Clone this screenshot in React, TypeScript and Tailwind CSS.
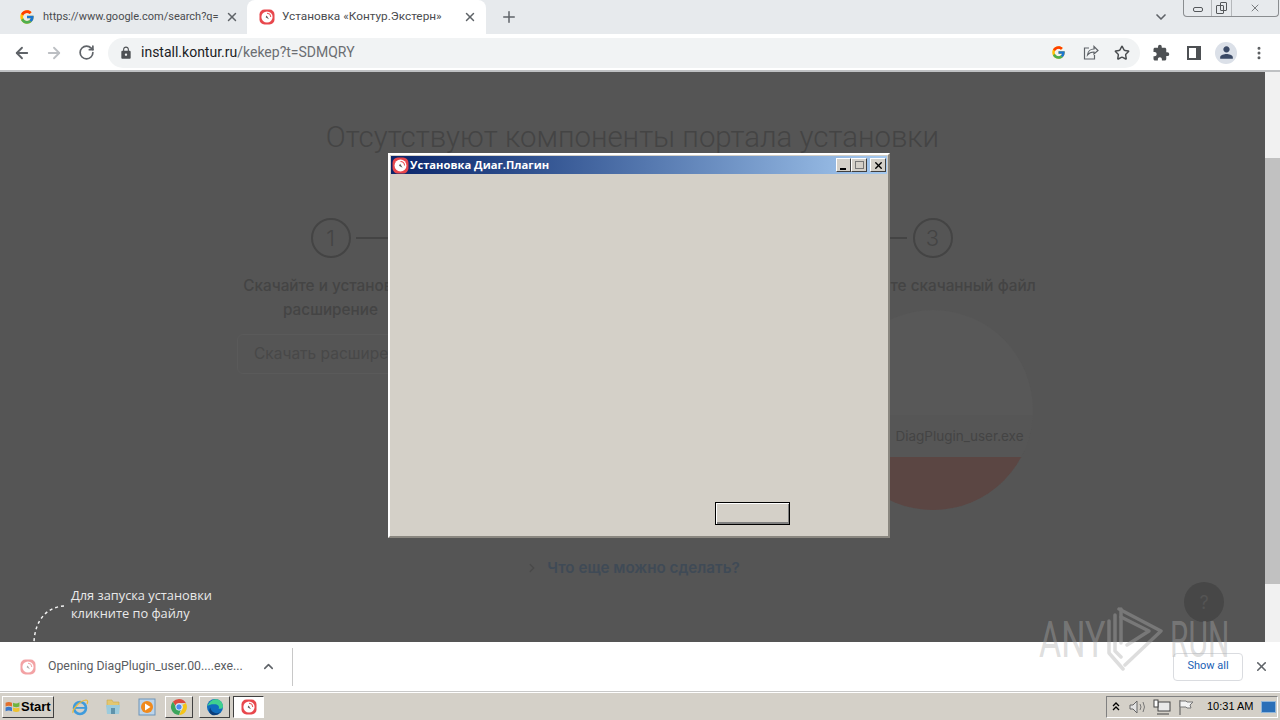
import { ArrowLeft, ArrowRight, RotateCw, Plus, X, ChevronDown, ChevronUp, ChevronRight, Star, MoreVertical } from "lucide-react";
import { FcGoogle } from "react-icons/fc";
import { MdExtension, MdLock, MdPerson } from "react-icons/md";

function KonturIcon({ size = 16, faded = false }: { size?: number; faded?: boolean }) {
  return (
    <svg width={size} height={size} viewBox="0 0 16 16" className={faded ? "opacity-50" : ""}>
      <rect x="0.5" y="0.5" width="15" height="15" rx="5" fill="#e8474c" />
      <circle cx="8" cy="8" r="5.6" fill="#fff" />
      <path d="M8 4.2 A3.8 3.8 0 0 1 11.8 8" fill="none" stroke="#e8474c" strokeWidth="1" />
      <path d="M7.6 6.4 L10 10.2 L6.6 8.2 Z" fill="#555" />
    </svg>
  );
}

function ChromeIcon() {
  return (
    <svg width="18" height="18" viewBox="0 0 18 18">
      <path d="M9 1a8 8 0 0 1 6.9 4H9a4 4 0 0 0-3.7 2.4L2.9 3.8A8 8 0 0 1 9 1z" fill="#dd4b3e" />
      <path d="M15.9 5A8 8 0 0 1 9 17l3.4-6A4 4 0 0 0 12.5 7z" fill="#f5c518" />
      <path d="M9 17a8 8 0 0 1-6.1-13.2L6 9a4 4 0 0 0 4.8 2.6z" fill="#3ba55c" />
      <circle cx="9" cy="9" r="3.2" fill="#4a8af4" stroke="#fff" strokeWidth="0.8" />
    </svg>
  );
}

function EdgeIcon() {
  return (
    <svg width="18" height="18" viewBox="0 0 18 18">
      <circle cx="9" cy="9" r="8" fill="#0f6cbd" />
      <path d="M1.5 8C3 3.5 7 1 10.5 1.2 14.5 1.5 17 5 17 8.5c0 2.2-2.4 2.6-4.4 2.2 1-1.6 0-4-3-4.4C6 6 3.5 6.5 1.5 8z" fill="#3fd08f" />
      <path d="M8 14.5c1.500 1.200 4 1 6-.4-2 3.400-6.400 4-8.600 2.400C3 15 2.600 11.800 4.400 9.500 4.200 11.500 6 13.800 8 14.500z" fill="#0b3d7a" />
    </svg>
  );
}

function IeIcon() {
  return (
    <svg width="18" height="18" viewBox="0 0 18 18">
      <circle cx="9" cy="10" r="6" fill="none" stroke="#3f9bdc" strokeWidth="2.6" />
      <rect x="4" y="9" width="10" height="1.8" fill="#3f9bdc" />
      <path d="M2 15C1 12 8 3 15 2c2 0 2 2 1 4" fill="none" stroke="#e8b93c" strokeWidth="1.2" />
    </svg>
  );
}

function FolderIcon() {
  return (
    <svg width="18" height="18" viewBox="0 0 18 18">
      <path d="M3 2h5l1 2h6v5H3z" fill="#e3c770" stroke="#c9a94f" strokeWidth="0.6" />
      <path d="M2 7h14l-1 9H3z" fill="#9ccbdc" />
      <rect x="7" y="10" width="4" height="6" fill="#5f93ab" />
    </svg>
  );
}

function MediaIcon() {
  return (
    <svg width="18" height="18" viewBox="0 0 18 18">
      <rect x="1" y="1" width="16" height="16" fill="#bcd4ea" stroke="#6d94b8" />
      <circle cx="9" cy="9" r="6" fill="#f08a1d" />
      <path d="M7 5.5L12.5 9 7 12.5z" fill="#fff" />
    </svg>
  );
}

function WinFlag() {
  return (
    <svg width="17" height="16" viewBox="0 0 15 15" className="shrink-0">
      <path d="M1 3.5C3 2.500 5 2.500 7 3.5V7C5 6 3 6 1 7z" fill="#e2702c" />
      <path d="M8 3.5C10 4.500 12 4.500 14 3V7C12 8 10 8 8 7z" fill="#6fb43f" />
      <path d="M1 8C3 7 5 7 7 8v3.500C5 10.500 3 10.500 1 11.500z" fill="#3a78c9" />
      <path d="M8 8c2 1 4 1 6 0v3.500c-2 1-4 1-6 0z" fill="#eec22e" />
    </svg>
  );
}

function ShareIcon() {
  return (
    <svg width="17" height="17" viewBox="0 0 17 17" fill="none" stroke="#5f6368" strokeWidth="1.2" className="ml-[16px]">
      <path d="M7 4H2.500v11h10v-4" />
      <path d="M5.500 11c.300-3.500 3-6 6.500-6V2.500l4 4-4 3.500V8c-3 0-5 1-6.500 3z" />
    </svg>
  );
}

export default function App() {
  return (
    <div className="relative w-[1280px] h-[720px] overflow-hidden flex flex-col font-['Roboto',sans-serif] bg-[#d4d0c8]">
      {/* browser chrome */}
      <div className="h-[34px] shrink-0 bg-[#e7eaed] flex items-start pl-[8px]">
        <div className="w-[239px] h-[34px] flex items-center pl-[11px] pr-[8px]">
          <FcGoogle size={16} className="shrink-0" />
          <span className="ml-[8px] flex-1 whitespace-nowrap text-[11px] text-[#4a4c4f]">https://www.google.com/search?q=</span>
          <X size={14} strokeWidth={2.5} className="shrink-0 text-[#5f6368]" />
        </div>
        <div className="w-[239px] h-[34px] flex items-center bg-white rounded-t-[8px] pl-[12px] pr-[9px]">
          <KonturIcon />
          <span className="ml-[7px] flex-1 whitespace-nowrap text-[11.8px] text-[#4a4c4f]">Установка «Контур.Экстерн»</span>
          <X size={14} strokeWidth={2.5} className="shrink-0 text-[#5f6368]" />
        </div>
        <Plus size={18} strokeWidth={2} className="ml-[14px] mt-[8px] text-[#5f6368]" />
        <ChevronDown size={16} strokeWidth={2.5} className="ml-[635px] mt-[9px] text-[#5f6368]" />
        <div className="ml-[14px] w-[96px] h-[17px] flex border border-t-0 border-[#8a8d90] rounded-b-[4px]">
          <div className="w-[28px] flex items-center justify-center border-r border-[#b5b8bb]">
            <span className="mt-[3px] w-[10px] h-[5px] border border-[#55585b] rounded-[2px]" />
          </div>
          <div className="w-[20px] flex items-center justify-center border-r border-[#b5b8bb] relative">
            <span className="w-[8px] h-[9px] mt-[2px] -ml-[3px] border border-[#55585b] rounded-[1px]" />
            <span className="absolute top-[2px] left-[8px] w-[7px] h-[9px] border border-[#55585b] rounded-[1px]" />
          </div>
          <div className="flex-1 flex items-center justify-center">
            <X size={12} strokeWidth={1.5} className="text-[#55585b]" />
          </div>
        </div>
      </div>

      <div className="h-[38px] shrink-0 bg-white border-b-2 border-[#bfc1c3] flex items-center pt-[1px] pl-[13px] text-[#5f6368]">
        <ArrowLeft size={18} strokeWidth={2.4} />
        <ArrowRight size={18} strokeWidth={2.4} className="ml-[14px] text-[#bcbfc3]" />
        <RotateCw size={17} strokeWidth={2.4} className="ml-[15px]" />
        <div className="ml-[13px] w-[1032px] h-[30px] rounded-full bg-[#f1f3f4] flex items-center pl-[11px] pr-[10px]">
          <MdLock size={14} className="text-[#4e5154]" />
          <span className="ml-[8px] text-[14px] text-[#202124]">
            install.kontur.ru<span className="text-[#6b6e72]">/kekep?t=SDMQRY</span>
          </span>
          <FcGoogle size={15} className="ml-auto" />
          <ShareIcon />
          <Star size={16} strokeWidth={2.2} className="ml-[15px] text-[#4a4d50]" />
        </div>
        <MdExtension size={18} className="ml-[12px] text-[#4d5053]" />
        <div className="ml-[17px] w-[14px] h-[14px] border-2 border-[#4d5053] border-r-[5px]" />
        <div className="ml-[14px] w-[22px] h-[22px] rounded-full bg-[#dbe0e8] flex items-center justify-center">
          <MdPerson size={19} className="text-[#3b4a66]" />
        </div>
        <MoreVertical size={16} strokeWidth={2.5} className="ml-[14px] text-[#5a5d60]" />
      </div>

      {/* dimmed page */}
      <div className="h-[570px] shrink-0 flex">
        <div className="relative flex-1 bg-[#555555] overflow-hidden pt-[47px] flex flex-col items-center font-['Inter',sans-serif]">
          <h1 className="font-['Roboto',sans-serif] text-[29.4px] font-light leading-[36px] whitespace-nowrap text-[#444444]">
            Отсутствуют компоненты портала установки
          </h1>

          <div className="mt-[63px] mr-[2px] w-[903px] grid grid-cols-3 text-[#444444]">
            <div className="flex flex-col items-center">
              <div className="relative w-full flex justify-center">
                <span className="w-[40px] h-[40px] rounded-full border-2 border-[#444444] flex items-center justify-center text-[22px] font-light">1</span>
                <span className="absolute left-[176px] right-0 top-[19px] h-[2px] bg-[#444444]" />
              </div>
              <p className="mt-[16px] text-[15.3px] leading-[24px] font-medium text-center">
                Скачайте и установите<br />расширение
              </p>
              <div className="mt-[12px] w-[187px] h-[40px] flex items-center pl-[16px] border border-[#5a5a5a] rounded-[6px] whitespace-nowrap text-[15.5px] text-[#484848]">
                Скачать расширение
              </div>
            </div>

            <div />

            <div className="flex flex-col items-center">
              <div className="relative w-full flex justify-center">
                <span className="absolute left-0 right-[176px] top-[19px] h-[2px] bg-[#444444]" />
                <span className="w-[40px] h-[40px] rounded-full border-2 border-[#444444] flex items-center justify-center text-[22px] font-light">3</span>
              </div>
              <p className="mt-[16px] h-[36px] text-[15.3px] leading-[24px] font-medium text-center whitespace-nowrap">
                Запустите скачанный файл
              </p>
              <div className="w-[200px] h-[200px] rounded-full overflow-hidden flex flex-col bg-[#585858]">
                <div className="flex-1" />
                <div className="h-[42px] shrink-0 bg-[#565656] flex items-center pl-[63px] text-[13.5px] whitespace-nowrap text-[#444444]">
                  DiagPlugin_user.exe
                </div>
                <div className="h-[53px] shrink-0 bg-[#5b4643]" />
              </div>
            </div>
          </div>

          <div className="mt-[46px] flex items-center text-[15.2px] leading-[24px] font-semibold text-[#3f4a56]">
            <ChevronRight size={14} strokeWidth={2.5} className="mr-[8px] text-[#4a4a4a]" />
            Что еще можно сделать?
          </div>

          <div className="absolute left-[71px] top-[514px] text-[12.8px] leading-[18px] text-[#e9e9e9] font-['Open_Sans',sans-serif]">
            Для запуска установки<br />кликните по файлу
          </div>
          <svg width="40" height="40" viewBox="0 0 40 40" className="absolute left-[28px] top-[530px]">
            <path d="M36 4 C18 5 7 19 6 40" fill="none" stroke="#f2f2f2" strokeWidth="1.5" strokeDasharray="3 3" />
          </svg>
          <span className="absolute left-[1184px] top-[510px] w-[40px] h-[40px] rounded-full bg-[#474747] flex items-center justify-center text-[18px] text-[#545454]">?</span>
        </div>

        <div className="w-[15px] bg-[#f1f1f1] flex flex-col">
          <div className="h-[17px] shrink-0" />
          <div className="mt-[69px] h-[426px] bg-[#c1c1c1]" />
        </div>
      </div>

      {/* download bar */}
      <div className="h-[50px] shrink-0 bg-white border-b border-[#c9c9c9] flex items-center pl-[20px] pr-[11px]">
        <KonturIcon faded />
        <span className="ml-[12px] w-[203px] text-[12.3px] text-[#5a5c5f] whitespace-nowrap">Opening DiagPlugin_user.00....exe...</span>
        <ChevronUp size={15} strokeWidth={2.5} className="ml-[10px] text-[#5f6368]" />
        <span className="ml-[16px] w-px h-[38px] bg-[#c8c8c8]" />
        <div className="ml-auto w-[70px] h-[28px] rounded-[4px] border border-[#dadce0] flex items-center justify-center text-[11px] text-[#1a5fb4]">Show all</div>
        <X size={15} strokeWidth={2.5} className="ml-[11px] text-[#5f6368]" />
      </div>

      {/* taskbar */}
      <div className="flex-1 border-t border-white flex items-center pl-[2px] pr-[2px] font-['Liberation_Sans',sans-serif]">
        <div className="w-[52px] h-[22px] flex items-center pl-[1px] gap-[0px] bg-[#d4d0c8] border border-t-white border-l-white border-r-[#404040] border-b-[#404040] text-[13px] font-bold text-black">
          <WinFlag />Start
        </div>
        <span className="ml-[17px]"><IeIcon /></span>
        <span className="ml-[15px]"><FolderIcon /></span>
        <span className="ml-[16px]"><MediaIcon /></span>
        <span className="ml-[9px] w-[28px] h-[22px] flex items-center justify-center border border-t-white border-l-white border-r-[#404040] border-b-[#404040]"><ChromeIcon /></span>
        <span className="ml-[6px] w-[31px] h-[22px] flex items-center justify-center border border-t-white border-l-white border-r-[#404040] border-b-[#404040]"><EdgeIcon /></span>
        <span className="ml-[3px] w-[31px] h-[22px] flex items-center justify-center bg-white border border-t-[#404040] border-l-[#404040] border-r-white border-b-white"><KonturIcon /></span>

        <div className="ml-auto w-[172px] h-[22px] flex items-center pl-[5px] pr-[1px] border border-t-[#808080] border-l-[#808080] border-r-white border-b-white text-[11px] text-black">
          <svg width="8" height="10" viewBox="0 0 8 10" fill="none" stroke="#000" strokeWidth="1.3">
            <path d="M1 4l3-3 3 3M1 8l3-3 3 3" />
          </svg>
          <svg width="18" height="14" viewBox="0 0 18 14" className="ml-[9px]">
            <path d="M1 5h3l4-4v12l-4-4H1z" fill="#e3e3e3" stroke="#666" />
            <path d="M11 4q2 3 0 6M14 2q3 5 0 10" fill="none" stroke="#777" />
          </svg>
          <svg width="18" height="16" viewBox="0 0 18 16" className="ml-[6px]">
            <rect x="5" y="3" width="12" height="9" fill="#e9e9e9" stroke="#444" />
            <rect x="1" y="1" width="4" height="7" fill="#fff" stroke="#444" />
            <path d="M4 15h12" stroke="#444" />
          </svg>
          <svg width="16" height="16" viewBox="0 0 16 16" className="ml-[7px]">
            <path d="M2 1v15" stroke="#555" />
            <path d="M2 2h6l1 1h6l-3 3 1 3H9L8 8H2z" fill="#f3f3f3" stroke="#777" />
          </svg>
          <span className="ml-[13px] whitespace-nowrap">10:31 AM</span>
          <span className="ml-auto w-[15px] h-[12px] bg-[#2a6fb8] border border-[#8fb5d9]" />
        </div>
      </div>

      {/* installer window */}
      <div className="absolute left-[388px] top-[153px] w-[502px] h-[385px] bg-[#d4d0c8] border-t-2 border-l-2 border-white border-r-2 border-r-[#8a8780] border-b-2 border-b-[#8a8780] p-px flex flex-col">
        <div className="h-[18px] shrink-0 bg-gradient-to-r from-[#0a246a] to-[#a6caf0] flex items-center pl-[1px] pr-[1px]">
          <KonturIcon size={17} />
          <span className="ml-[1px] text-[11.2px] font-bold text-white font-['Open_Sans',sans-serif] whitespace-nowrap">Установка Диаг.Плагин</span>
          <div className="ml-auto flex">
            <span className="w-[15px] h-[14px] bg-[#d4d0c8] border border-t-white border-l-white border-r-[#404040] border-b-[#404040] flex items-center justify-center">
              <span className="mt-[7px] -ml-[2px] w-[6px] h-[2px] bg-black" />
            </span>
            <span className="w-[16px] h-[14px] bg-[#d4d0c8] border border-t-white border-l-white border-r-[#404040] border-b-[#404040] flex items-center justify-center">
              <span className="w-[9px] h-[8px] border border-[#777]" />
            </span>
            <span className="ml-[3px] w-[16px] h-[14px] bg-[#d4d0c8] border border-t-white border-l-white border-r-[#404040] border-b-[#404040] flex items-center justify-center">
              <X size={11} strokeWidth={3} className="text-black" />
            </span>
          </div>
        </div>
        <div className="flex-1 flex items-end justify-end pr-[97px] pb-[10px]">
          <div className="w-[75px] h-[23px] bg-[#d4d0c8] border border-black shadow-[inset_1px_1px_0_#fff,inset_-1px_-2px_0_#808080]" />
        </div>
      </div>

      {/* watermark */}
      <div className="absolute left-[1039px] top-[613px] w-[196px] h-[54px] flex items-center text-[50px] font-normal leading-none text-[#acacac]/40 pointer-events-none font-['Roboto',sans-serif]">
        <span className="scale-x-[0.68] origin-left w-[66px] shrink-0">ANY</span>
        <svg width="66" height="72" viewBox="0 0 66 72" className="shrink-0 -mt-[3px] opacity-40" fill="none" stroke="#acacac" strokeWidth="3.5" strokeLinecap="round" strokeLinejoin="round">
          <path d="M14 6L56 28 20 62" />
          <path d="M16 14L44 28 22 42" />
          <path d="M4 18V50L18 66M10 12V48L16 54" />
          <path d="M16 6V40" />
        </svg>
        <span className="scale-x-[0.6] origin-left -ml-[1px]">RUN</span>
      </div>
    </div>
  );
}
